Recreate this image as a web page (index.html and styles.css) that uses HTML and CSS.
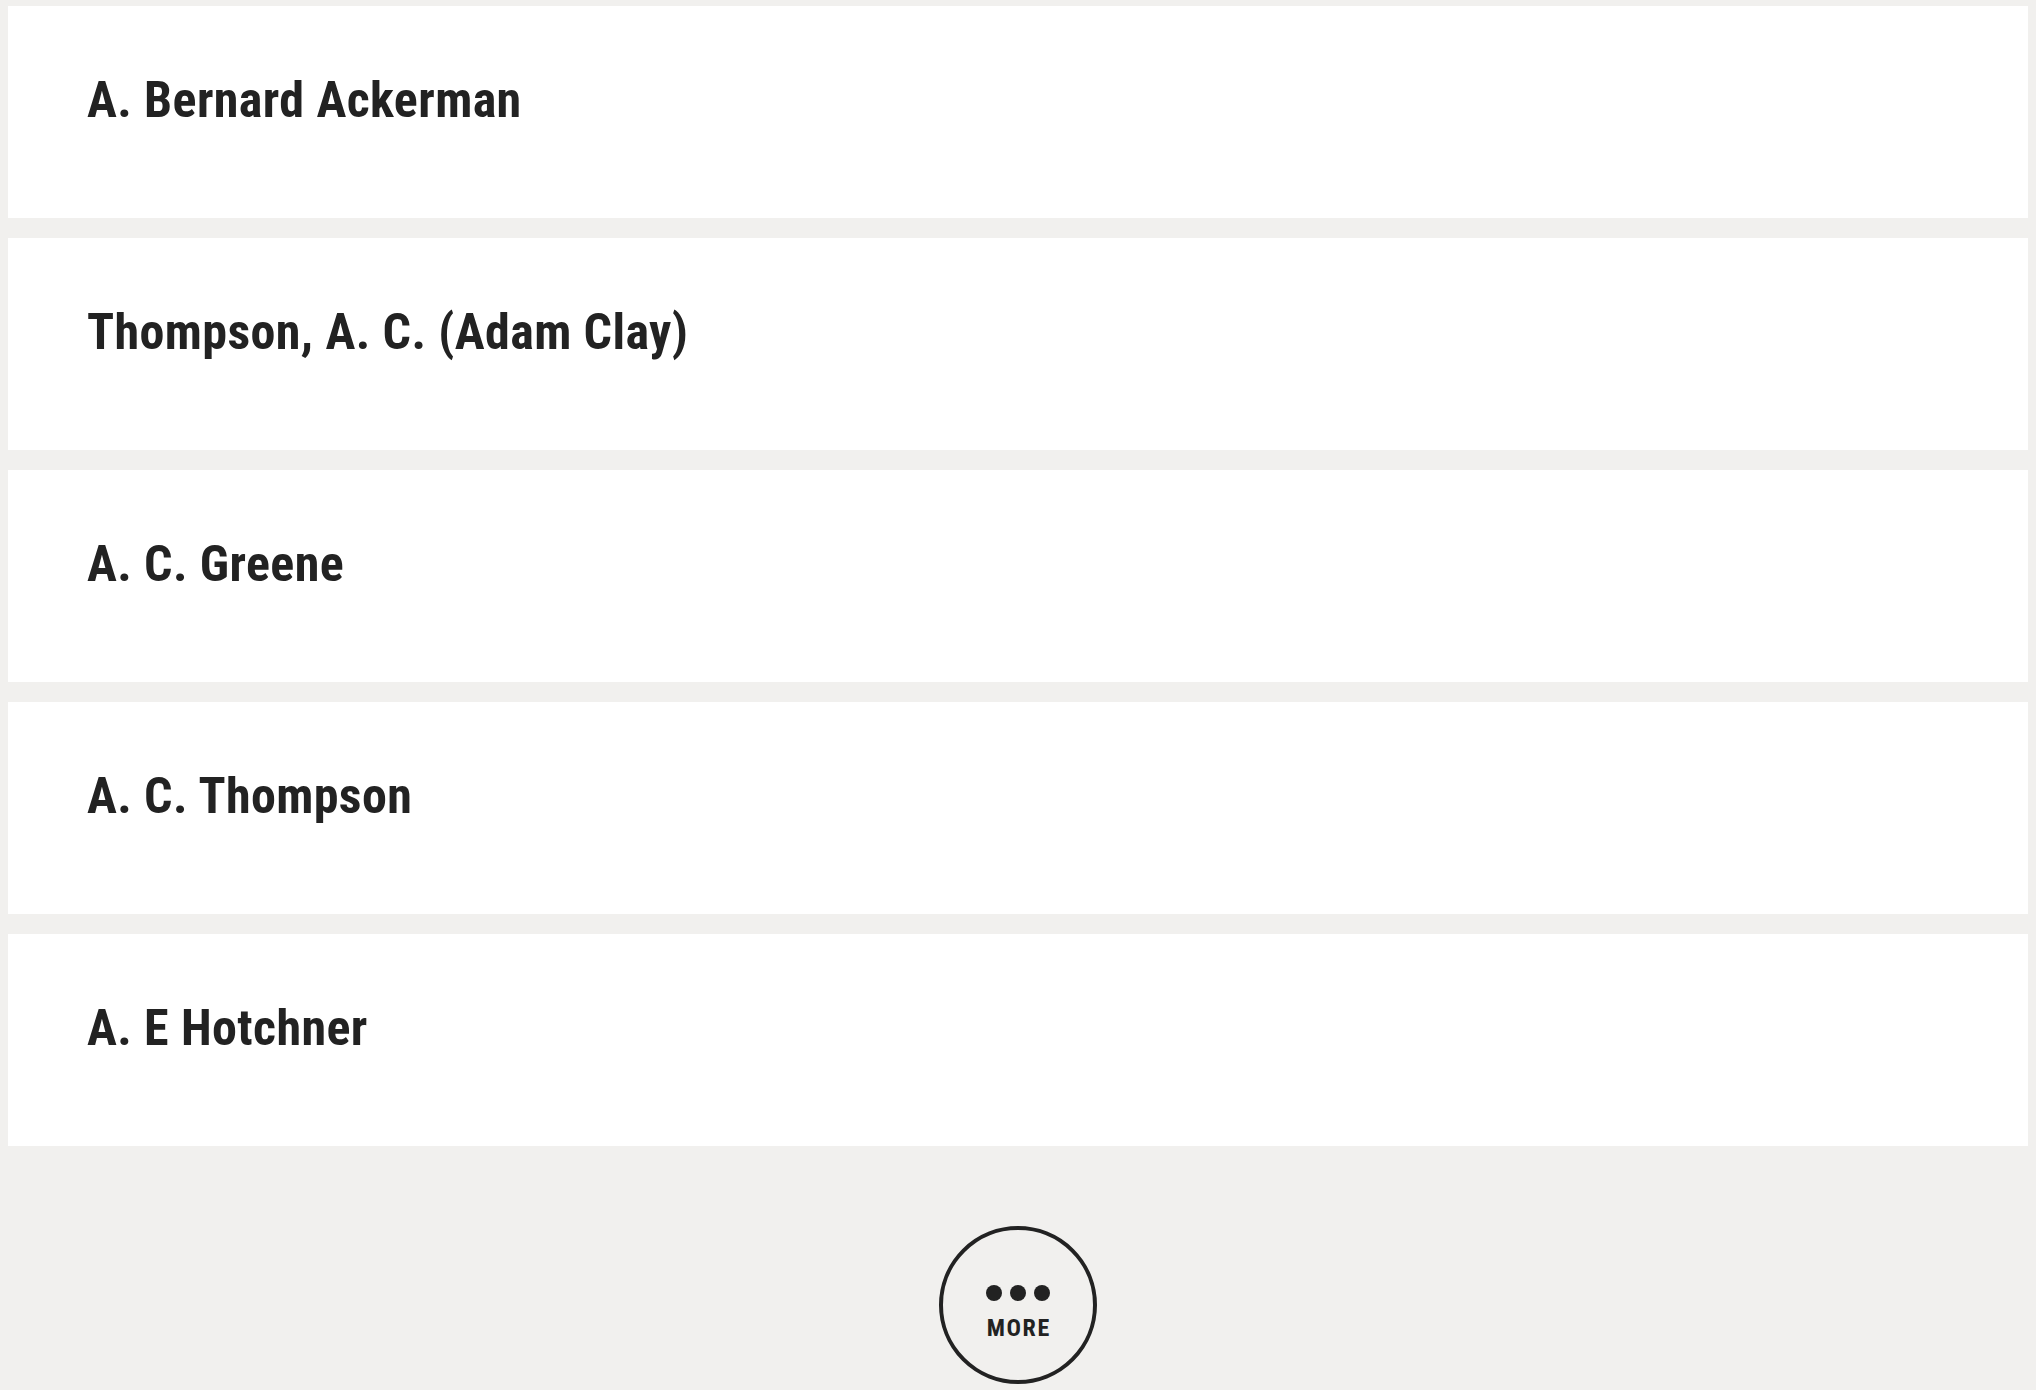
FILE: index.html
```html
<!DOCTYPE html>
<html lang="en">
<head>
<meta charset="utf-8">
<title>Authors</title>
<link rel="stylesheet" href="styles.css">
</head>
<body>
<main class="page">
  <ul class="list">
    <li class="card"><a class="card-link" href="#">A. Bernard Ackerman</a></li>
    <li class="card"><a class="card-link" href="#">Thompson, A. C. (Adam Clay)</a></li>
    <li class="card"><a class="card-link" href="#">A. C. Greene</a></li>
    <li class="card"><a class="card-link" href="#">A. C. Thompson</a></li>
    <li class="card"><a class="card-link" href="#">A. E Hotchner</a></li>
  </ul>
  <div class="more-wrap">
    <button class="more" type="button">
      <span class="dots"><span class="dot"></span><span class="dot"></span><span class="dot"></span></span>
      <span class="more-label">MORE</span>
    </button>
  </div>
</main>
</body>
</html>
```
FILE: styles.css
```css
html, body {
  margin: 0;
  padding: 0;
  background: #f1f0ee;
}
body {
  font-family: "Roboto Condensed", "Liberation Sans Narrow", "Liberation Sans", sans-serif;
  color: #222222;
}
.page {
  padding: 6px 8px 0;
}
.list {
  list-style: none;
  margin: 0;
  padding: 0;
  display: flex;
  flex-direction: column;
  gap: 20px;
}
.card {
  background: #ffffff;
  height: 212px;
  box-sizing: border-box;
  padding: 65px 79px 0;
}
.card-link {
  display: block;
  font-size: 50px;
  line-height: 59px;
  font-weight: 700;
  letter-spacing: 0.4px;
  color: #222222;
  text-decoration: none;
  white-space: nowrap;
}
.more-wrap {
  display: flex;
  justify-content: center;
  padding-top: 80px;
}
.more {
  width: 158px;
  height: 158px;
  box-sizing: border-box;
  border: 4px solid #222222;
  border-radius: 50%;
  background: transparent;
  padding: 55px 0 0;
  margin: 0;
  display: flex;
  flex-direction: column;
  align-items: center;
  font-family: inherit;
  color: #222222;
  cursor: pointer;
}
.dots {
  display: flex;
  gap: 8px;
  height: 16px;
}
.dot {
  width: 16px;
  height: 16px;
  border-radius: 50%;
  background: #222222;
}
.more-label {
  margin-top: 15px;
  font-size: 24px;
  line-height: 24px;
  font-weight: 700;
  letter-spacing: 1.6px;
  padding-left: 1.6px;
}
```
